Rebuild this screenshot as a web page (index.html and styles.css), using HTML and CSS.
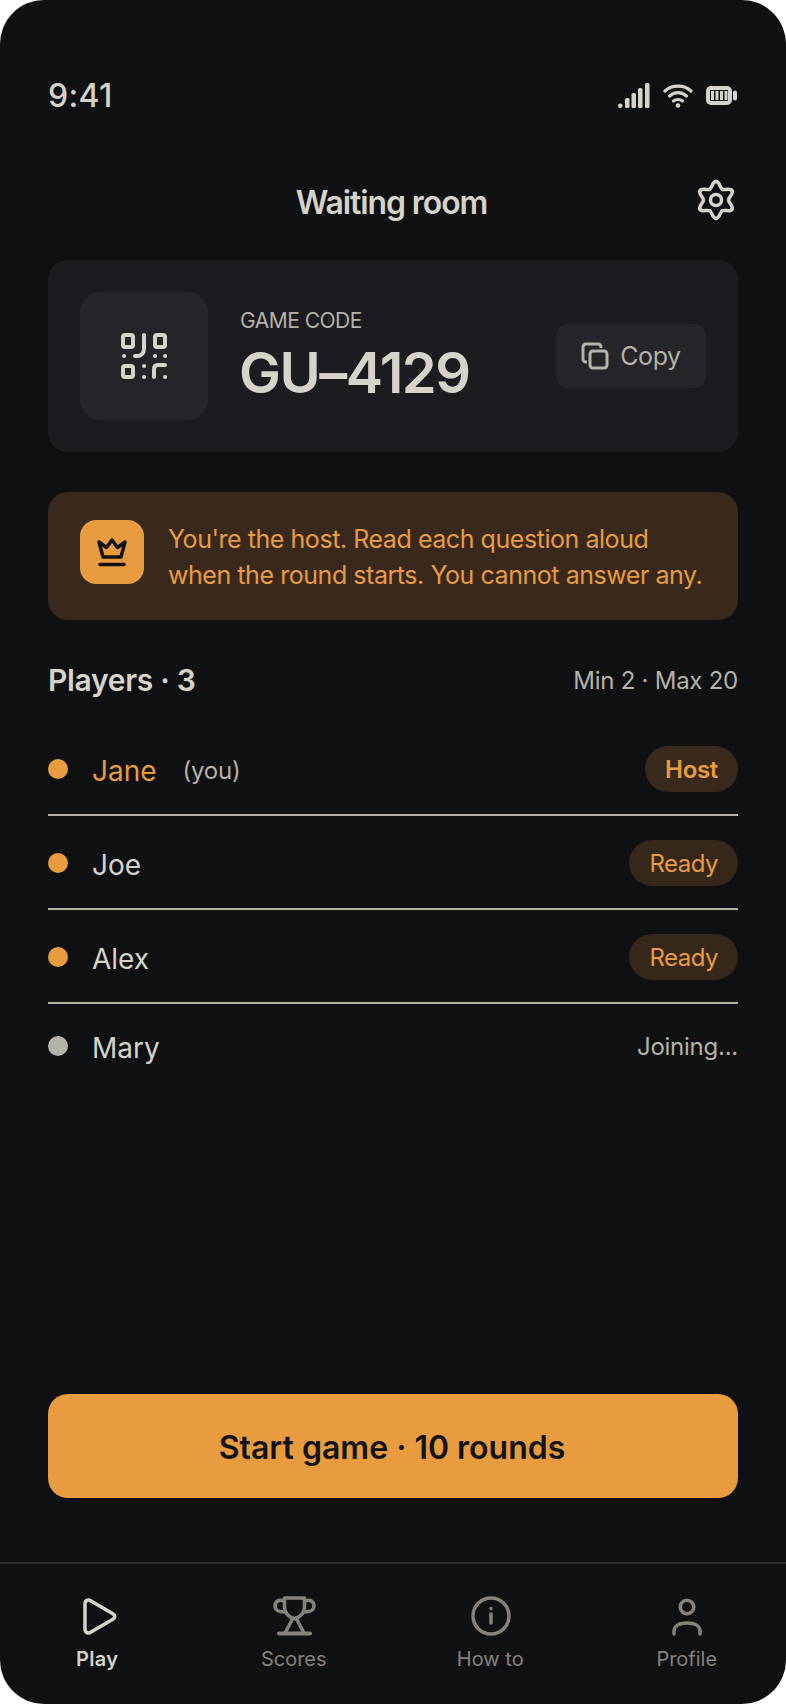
FILE: index.html
```html
<!DOCTYPE html>
<html lang="en">
<head>
  <meta charset="UTF-8" />
  <meta name="viewport" content="width=device-width, initial-scale=1.0" />
  <title>Waiting room</title>
  <link rel="stylesheet" href="styles.css">
</head>
<body>
  <div class="phone">
    <div class="status">
      <span class="time">9:41</span>
      <div class="status-icons">
        <svg width="32" height="25" viewBox="0 0 32 25" fill="#d6d3c9"><rect x="0" y="20.5" width="4.5" height="4.5" rx="2.2"/><rect x="7" y="15" width="4.5" height="10" rx="1.5"/><rect x="13.5" y="10" width="4.5" height="15" rx="1.5"/><rect x="20" y="5" width="4.5" height="20" rx="1.5"/><rect x="27" y="0" width="4.5" height="25" rx="1.5"/></svg>
        <svg width="30" height="25" viewBox="0 0 30 25" fill="none" stroke="#d6d3c9" stroke-width="3.2" stroke-linecap="round"><path d="M2 8c7-6.500 19-6.500 26 0"/><path d="M6.500 13c5-4.500 12-4.500 17 0"/><path d="M10.500 18c2.500-2 6.500-2 9 0"/><circle cx="15" cy="22.500" r="2.300" fill="#d6d3c9" stroke="none"/></svg>
        <svg width="31" height="19" viewBox="0 0 31 19"><rect x="0" y="0" width="26" height="19" rx="5" fill="#d6d3c9"/><rect x="4" y="4" width="18" height="11" fill="#101113"/><rect x="5" y="5" width="3" height="9" fill="#d6d3c9"/><rect x="9.500" y="5" width="3" height="9" fill="#d6d3c9"/><rect x="14" y="5" width="3" height="9" fill="#d6d3c9"/><rect x="18.500" y="5" width="3" height="9" fill="#d6d3c9"/><rect x="27" y="4.500" width="4" height="10" rx="2" fill="#d6d3c9"/></svg>
      </div>
    </div>

    <div class="header">
      <h1>Waiting room</h1>
      <svg class="gear" width="40" height="44" viewBox="0 0 40 44" fill="none" stroke="#d6d3c9" stroke-width="3.5" stroke-linecap="round">
        <g transform="translate(20 22)">
          <path d="M0 -18.500C3.500 -18.500 4.080 -12.080 6.250 -10.830C8.420 -9.580 14.270 -12.280 16.020 -9.250"/>
          <path transform="rotate(60)" d="M0 -18.500C3.500 -18.500 4.080 -12.080 6.250 -10.830C8.420 -9.580 14.270 -12.280 16.020 -9.250"/>
          <path transform="rotate(120)" d="M0 -18.500C3.500 -18.500 4.080 -12.080 6.250 -10.830C8.420 -9.580 14.270 -12.280 16.020 -9.250"/>
          <path transform="rotate(180)" d="M0 -18.500C3.500 -18.500 4.080 -12.080 6.250 -10.830C8.420 -9.580 14.270 -12.280 16.020 -9.250"/>
          <path transform="rotate(240)" d="M0 -18.500C3.500 -18.500 4.080 -12.080 6.250 -10.830C8.420 -9.580 14.270 -12.280 16.020 -9.250"/>
          <path transform="rotate(300)" d="M0 -18.500C3.500 -18.500 4.080 -12.080 6.250 -10.830C8.420 -9.580 14.270 -12.280 16.020 -9.250"/>
          <circle r="5.500"/>
        </g>
      </svg>
    </div>

    <div class="code-card">
      <div class="qr-tile">
        <svg width="46" height="46" viewBox="0 0 46 46" fill="none" stroke="#d6d3c9" stroke-width="4" stroke-linecap="round" stroke-linejoin="round"><rect x="2" y="2" width="10" height="12" rx="2"/><rect x="34" y="2" width="10" height="12" rx="2"/><rect x="2" y="33" width="10" height="11" rx="2"/><path d="M23 2v14c0 4-3 7-7 7h-2"/><path d="M3 23h.1M34 23h.1M44 23h.1M23 33h.1M23 44h.1M44 44h.1"/><path d="M33 44v-8c0-3 2-4 4-4h7"/></svg>
      </div>
      <div class="code-text">
        <div class="code-label">GAME CODE</div>
        <div class="code-value">GU–4129</div>
      </div>
      <div class="copy-btn">
        <svg width="28" height="28" viewBox="0 0 28 28" fill="none" stroke="#b5b2a8" stroke-width="3" stroke-linejoin="round"><rect x="9" y="9" width="17" height="17" rx="3"/><path d="M6 20H5a3 3 0 0 1-3-3V5a3 3 0 0 1 3-3h12a3 3 0 0 1 3 3v1"/></svg>
        <span>Copy</span>
      </div>
    </div>

    <div class="host-note">
      <div class="crown-tile">
        <svg width="34" height="34" viewBox="0 0 34 34" fill="none" stroke="#111214" stroke-width="3.500" stroke-linejoin="round"><path d="M8 22 4 7l7.500 5.500L17 5l5.500 7.500L30 7l-4 15z"/><path d="M5 29.500h24" stroke-linecap="round"/></svg>
      </div>
      <p>You're the host. Read each question aloud when the round starts. You cannot answer any.</p>
    </div>

    <div class="players-head">
      <h2>Players · 3</h2>
      <span>Min 2 · Max 20</span>
    </div>

    <div class="player">
      <span class="dot"></span><span class="name me">Jane</span><span class="you">(you)</span>
      <span class="pill strong">Host</span>
    </div>
    <div class="player">
      <span class="dot"></span><span class="name">Joe</span>
      <span class="pill">Ready</span>
    </div>
    <div class="player">
      <span class="dot"></span><span class="name">Alex</span>
      <span class="pill">Ready</span>
    </div>
    <div class="player last">
      <span class="dot grey"></span><span class="name">Mary</span>
      <span class="joining">Joining...</span>
    </div>

    <div class="start-btn">Start game · 10 rounds</div>

    <div class="tabs">
      <div class="tab active">
        <svg width="40" height="40" viewBox="0 -2 40 40" fill="none" stroke="#d6d3c9" stroke-width="3.500" stroke-linejoin="round"><path d="M7 6c0-3.500 3-5 6-3l21.500 12.500c3 1.700 3 4.300 0 6L13 34c-3 2-6 .5-6-3z"/></svg>
        <span>Play</span>
      </div>
      <div class="tab">
        <svg width="43" height="40" viewBox="0 0 43 40" fill="none" stroke="#85827a" stroke-width="3.500" stroke-linejoin="round" stroke-linecap="round"><path d="M11.500 2H31.500V11C31.500 18 27 21 21.500 23C16 21 11.500 18 11.500 11Z"/><path d="M19.500 23 12 37M23.500 23 31 37"/><path d="M11 5C5 3 2 6 2 10C2 14 6 16 11 16M32 5C38 3 41 6 41 10C41 14 37 16 32 16"/><path d="M6 37.500H37" stroke-width="4"/></svg>
        <span>Scores</span>
      </div>
      <div class="tab">
        <svg width="40" height="40" viewBox="0 0 40 40" fill="none" stroke="#85827a" stroke-width="3.500" stroke-linecap="round"><circle cx="20" cy="20" r="18"/><path d="M20 18v9M20 12.500v.1"/></svg>
        <span>How to</span>
      </div>
      <div class="tab">
        <svg width="40" height="40" viewBox="-1 -2 40 40" fill="none" stroke="#85827a" stroke-width="3.500" stroke-linecap="round"><circle cx="18" cy="9" r="6.800"/><path d="M5 36v-3c0-5 5-8 13-8s13 3 13 8v3"/></svg>
        <span>Profile</span>
      </div>
    </div>
  </div>
</body>
</html>
```

FILE: styles.css
```css
* {
  box-sizing: border-box;
}
html, body {
  margin: 0;
  background: #fff;
}
body {
  font-family: Inter, "Liberation Sans", sans-serif;
  color: #d6d3c9;
}
h1, h2, p {
  margin: 0;
}
.phone {
  width: 786px;
  height: 1704px;
  background: #0f1012;
  border-radius: 44px;
  overflow: hidden;
  padding: 0 48px;
  display: flex;
  flex-direction: column;
}
.status {
  height: 52px;
  margin-top: 69px;
  display: flex;
  justify-content: space-between;
  align-items: center;
}
.time {
  font-size: 32px;
  font-weight: 500;
  letter-spacing: 0.3px;
}
.status-icons {
  display: flex;
  align-items: center;
  gap: 13px;
  margin-right: 1px;
}
.header {
  height: 64px;
  margin-top: 49px;
  display: flex;
  align-items: center;
  justify-content: center;
  position: relative;
}
h1 {
  font-size: 32px;
  font-weight: 600;
  letter-spacing: -1.100px;
  margin-right: 3px;
}
.gear {
  position: absolute;
  right: 2px;
  top: 8px;
}
.code-card {
  margin-top: 26px;
  height: 192px;
  background: #1b1b20;
  border-radius: 20px;
  padding: 32px;
  display: flex;
  align-items: center;
}
.qr-tile {
  width: 128px;
  height: 128px;
  background: #242429;
  border-radius: 20px;
  display: flex;
  align-items: center;
  justify-content: center;
}
.code-text {
  flex: 1;
  margin-left: 32px;
}
.code-label {
  font-size: 21px;
  letter-spacing: -0.500px;
  color: #b5b2a8;
  line-height: 28px;
}
.code-value {
  font-size: 56px;
  font-weight: 600;
  letter-spacing: -1.500px;
  line-height: 64px;
  margin: 6px 0 0 -1px;
}
.copy-btn {
  width: 150px;
  height: 64px;
  background: #242429;
  border-radius: 12px;
  display: flex;
  align-items: center;
  justify-content: center;
  gap: 11px;
  font-size: 25px;
  letter-spacing: -0.400px;
  color: #b5b2a8;
}
.host-note {
  margin-top: 40px;
  height: 128px;
  background: #39291c;
  border-radius: 20px;
  padding: 0 32px;
  display: flex;
  align-items: center;
  gap: 24px;
}
.crown-tile {
  width: 64px;
  height: 64px;
  flex: none;
  margin-bottom: 8px;
  background: #e89c3f;
  border-radius: 16px;
  display: flex;
  align-items: center;
  justify-content: center;
}
.host-note p {
  font-size: 25px;
  letter-spacing: -0.450px;
  line-height: 36px;
  color: #e89c3f;
  padding-top: 2px;
}
.players-head {
  margin-top: 40px;
  margin-bottom: 22px;
  height: 40px;
  display: flex;
  justify-content: space-between;
  align-items: center;
}
h2 {
  font-size: 30px;
  font-weight: 600;
  letter-spacing: -0.300px;
}
.players-head span {
  font-size: 24px;
  letter-spacing: -0.250px;
  color: #b5b2a8;
}
.player {
  height: 94px;
  padding-top: 2px;
  display: flex;
  align-items: center;
  font-size: 28px;
  border-bottom: 2px solid #b5b2a8;
}
.player.last {
  border-bottom: 0;
  height: 84px;
  padding-top: 0;
}
.dot {
  width: 20px;
  height: 20px;
  border-radius: 50%;
  background: #e89c3f;
  margin-right: 24px;
}
.dot.grey {
  background: #b5b2a8;
}
.name {
  padding-top: 3px;
}
.name.me {
  color: #e89c3f;
}
.you {
  font-size: 24px;
  letter-spacing: -0.250px;
  color: #b5b2a8;
  margin-left: 26px;
  padding-top: 3px;
}
.pill {
  margin-left: auto;
  height: 46px;
  padding: 0 20px;
  border-radius: 23px;
  background: #35271a;
  color: #e89c3f;
  font-size: 24px;
  letter-spacing: -0.500px;
  display: flex;
  align-items: center;
}
.pill.strong {
  background: #39291c;
  font-weight: 600;
  letter-spacing: -0.300px;
}
.joining {
  margin-left: auto;
  font-size: 24px;
  letter-spacing: -0.250px;
  color: #b5b2a8;
}
.start-btn {
  margin-top: auto;
  height: 104px;
  padding: 2px 2px 0 0;
  background: #e89c3f;
  border-radius: 20px;
  color: #111214;
  font-size: 32px;
  font-weight: 600;
  display: flex;
  align-items: center;
  justify-content: center;
}
.tabs {
  margin: 64px -48px 0;
  height: 142px;
  border-top: 2px solid #2a2a2c;
  display: grid;
  grid-template-columns: repeat(4, 1fr);
  padding-top: 32px;
}
.tab {
  display: flex;
  flex-direction: column;
  align-items: center;
  gap: 11px;
  font-size: 20px;
  color: #85827a;
}
.tab span {
  margin-right: 2px;
}
.tab.active {
  color: #d6d3c9;
  font-weight: 600;
  letter-spacing: 0.300px;
}
```
